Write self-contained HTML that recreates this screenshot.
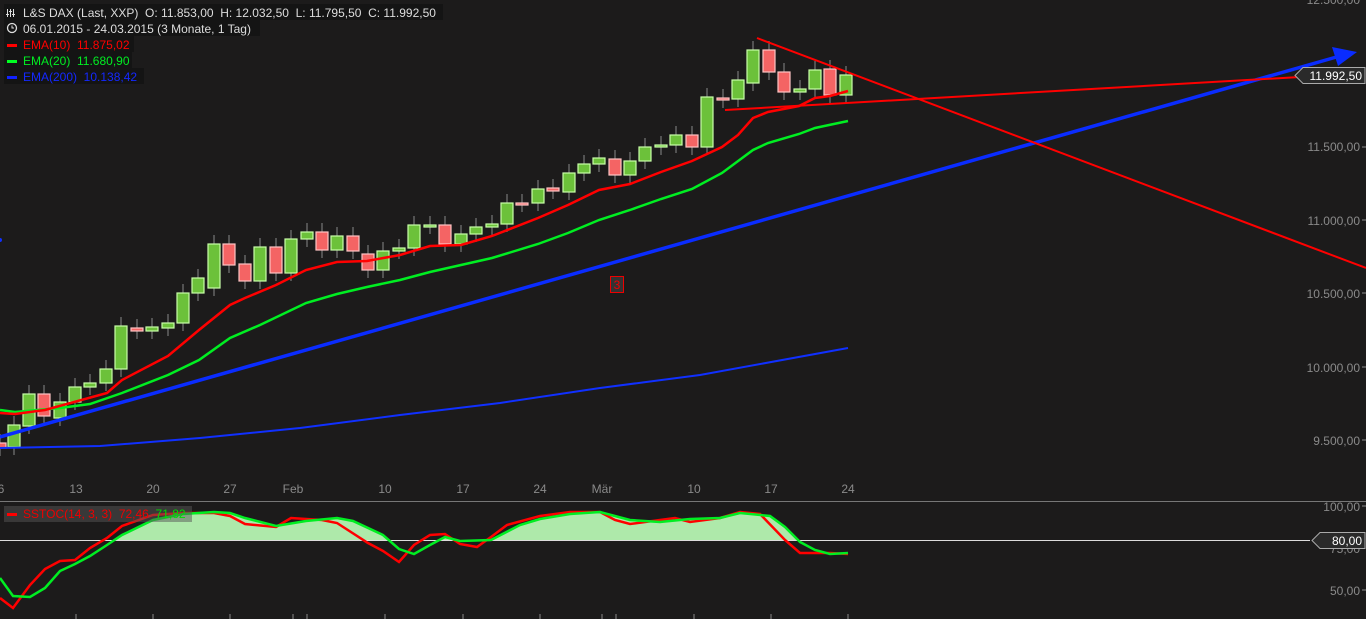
<!DOCTYPE html>
<html><head><meta charset="utf-8"><style>
html,body{margin:0;padding:0;background:#1c1b1b;width:1366px;height:619px;overflow:hidden}
svg{position:absolute;left:0;top:0}
.t{font-family:"Liberation Sans",sans-serif;font-size:12px;white-space:pre}
</style></head><body>
<svg id="s" width="1366" height="619" xmlns="http://www.w3.org/2000/svg">
<rect width="1366" height="619" fill="#1c1b1b"/>
<g id="candles"></g>
<polyline fill="none" stroke="#1030ff" stroke-width="2" points="0,448 100,446 200,438 300,428 400,415 500,403 600,388 700,375 848,348"/>
<polyline fill="none" stroke="#00ee22" stroke-width="2.5" points="0,410 15,412 60,408 90,404 122,393 168,375 199,360 230,338 260,325 306,303 337,294 367,287 400,280 430,272 461,265 492,258 538,244 568,233 599,220 630,210 661,199 692,189 722,173 753,150 768,143 799,134 815,128 848,121"/>
<polyline fill="none" stroke="#ff0000" stroke-width="2.5" points="0,413 15,414 45,410 107,393 122,380 168,356 199,330 230,305 245,298 276,285 306,270 337,262 367,261 400,255 430,246 461,245 492,236 538,218 568,205 599,190 630,184 661,172 692,161 722,147 738,135 753,118 768,112 799,106 815,98 830,96 848,91"/>
<line x1="0" y1="437" x2="1340" y2="56" stroke="#0a2cff" stroke-width="3.5"/>
<polygon points="1357,52 1332,47 1338,66" fill="#0a2cff"/>
<line x1="757" y1="38" x2="1366" y2="268" stroke="#ff0000" stroke-width="2"/>
<line x1="725" y1="110" x2="1300" y2="77" stroke="#ff0000" stroke-width="2"/>
<rect x="610.5" y="276.5" width="13" height="16" fill="#333" stroke="#e00" stroke-width="1"/>
<text x="617" y="289" class="t" fill="#e00" text-anchor="middle">3</text>
<circle cx="0" cy="240" r="2" fill="#1030ff"/>
<g class="t" fill="#8a8a8a" text-anchor="end">
<text x="1360" y="4">12.500,00</text>
<text x="1360" y="151">11.500,00</text>
<text x="1360" y="225">11.000,00</text>
<text x="1360" y="298">10.500,00</text>
<text x="1360" y="372">10.000,00</text>
<text x="1360" y="445">9.500,00</text>
<text x="1360" y="511">100,00</text>
<text x="1360" y="553">75,00</text>
<text x="1360" y="595">50,00</text>
</g>
<g stroke="#8a8a8a"><line x1="1362" y1="147" x2="1366" y2="147"/><line x1="1362" y1="220" x2="1366" y2="220"/><line x1="1362" y1="293" x2="1366" y2="293"/><line x1="1362" y1="367" x2="1366" y2="367"/><line x1="1362" y1="440" x2="1366" y2="440"/><line x1="1362" y1="506" x2="1366" y2="506"/><line x1="1362" y1="590" x2="1366" y2="590"/></g>
<polygon points="1295,75.5 1303,67.5 1365,67.5 1365,83.5 1303,83.5" fill="#2a2a2a" stroke="#aaa"/>
<text x="1362" y="80" class="t" fill="#fff" text-anchor="end">11.992,50</text>
<g class="t" fill="#8a8a8a" text-anchor="middle">
<text x="1" y="493">6</text><text x="76" y="493">13</text><text x="153" y="493">20</text><text x="230" y="493">27</text><text x="293" y="493">Feb</text><text x="385" y="493">10</text><text x="463" y="493">17</text><text x="540" y="493">24</text><text x="602" y="493">Mär</text><text x="694" y="493">10</text><text x="771" y="493">17</text><text x="848" y="493">24</text>
</g>
<g stroke="#8a8a8a"><line x1="76" y1="614" x2="76" y2="619"/><line x1="153" y1="614" x2="153" y2="619"/><line x1="230" y1="614" x2="230" y2="619"/><line x1="293" y1="614" x2="293" y2="619"/><line x1="307" y1="614" x2="307" y2="619"/><line x1="385" y1="614" x2="385" y2="619"/><line x1="463" y1="614" x2="463" y2="619"/><line x1="540" y1="614" x2="540" y2="619"/><line x1="602" y1="614" x2="602" y2="619"/><line x1="616" y1="614" x2="616" y2="619"/><line x1="694" y1="614" x2="694" y2="619"/><line x1="771" y1="614" x2="771" y2="619"/><line x1="848" y1="614" x2="848" y2="619"/></g>
<line x1="0" y1="501.5" x2="1366" y2="501.5" stroke="#777"/>
<defs><clipPath id="c"><rect x="0" y="500" width="1366" height="40"/></clipPath></defs>
<polygon clip-path="url(#c)" fill="#aee9aa" points="0,540 0,578 13,596 30,597 45,588 60,571 75,564 90,556 107,545 122,535 153,520 183,514 214,512 230,513 245,518 276,526 306,521 337,518 353,521 383,535 399,549 414,554 430,545 445,537 460,541 491,540 520,525 540,519 570,514 600,512 630,520 660,522 690,519 720,518 740,513 770,516 785,527 800,542 848,540"/>
<line x1="0" y1="540.5" x2="1310" y2="540.5" stroke="#ddd"/>
<polyline fill="none" stroke="#ff0000" stroke-width="2.5" points="0,598 13,608 30,585 45,569 60,561 75,560 90,548 107,538 122,526 153,515 183,513 214,513 230,516 245,524 276,527 291,518 306,519 322,520 337,523 368,543 383,551 399,562 414,545 430,535 445,534 460,544 477,547 491,537 507,525 540,516 570,512 600,512 615,520 630,524 660,520 675,518 690,522 720,518 740,512 760,514 785,540 800,553 830,553 848,554"/>
<polyline fill="none" stroke="#00ee22" stroke-width="2.5" points="0,578 13,596 30,597 45,588 60,571 75,564 90,556 107,545 122,535 153,520 183,514 214,512 230,513 245,518 276,526 306,521 337,518 353,521 383,535 399,549 414,554 430,545 445,537 460,541 491,540 520,525 540,519 570,514 600,512 630,520 660,522 690,519 720,518 740,513 770,516 785,527 800,542 815,550 830,554 848,553"/>
<polygon points="1312,540.5 1320,532.5 1365,532.5 1365,548.5 1320,548.5" fill="#2a2a2a" stroke="#aaa"/>
<text x="1362" y="545" class="t" fill="#fff" text-anchor="end">80,00</text>
<rect x="4" y="506" width="188" height="16" fill="#555" opacity="0.5"/>
<rect x="7" y="513" width="10" height="3" fill="#f00"/>
<text x="23" y="518" class="t" fill="#e00">SSTOC(14, 3, 3)  72,46  <tspan fill="#0d0">71,82</tspan></text>
<rect x="4" y="4" width="439" height="16" fill="#141414"/>
<rect x="4" y="20" width="256" height="16" fill="#141414"/>
<rect x="4" y="36" width="130" height="16" fill="#141414"/>
<rect x="4" y="52" width="128" height="16" fill="#141414"/>
<rect x="4" y="68" width="140" height="16" fill="#141414"/>
<g stroke="#ddd" stroke-width="1"><line x1="7.5" y1="9" x2="7.5" y2="17"/><line x1="10.5" y1="9" x2="10.5" y2="17"/><line x1="13.5" y1="9" x2="13.5" y2="17"/><line x1="6" y1="14.5" x2="9" y2="14.5"/><line x1="9" y1="11.5" x2="12" y2="11.5"/><line x1="12" y1="14.5" x2="15" y2="14.5"/></g>
<circle cx="12" cy="28" r="4.5" fill="none" stroke="#ddd" stroke-width="1.3"/><path d="M12 25.5V28H14" stroke="#ddd" fill="none"/>
<text x="23" y="17" class="t" fill="#ddd">L&amp;S DAX (Last, XXP)  O: 11.853,00  H: 12.032,50  L: 11.795,50  C: 11.992,50</text>
<text x="23" y="33" class="t" fill="#ddd">06.01.2015 - 24.03.2015 (3 Monate, 1 Tag)</text>
<rect x="7" y="44" width="10" height="3" fill="#f00"/><text x="23" y="49" class="t" fill="#f00">EMA(10)  11.875,02</text>
<rect x="7" y="60" width="10" height="3" fill="#0f2"/><text x="23" y="65" class="t" fill="#0e2">EMA(20)  11.680,90</text>
<rect x="7" y="76" width="10" height="3" fill="#12f"/><text x="23" y="81" class="t" fill="#1428ff">EMA(200)  10.138,42</text>
</svg>
<script>
var d=[[0,443,448,'r'],[14,425,447,'g'],[29,394,426,'g'],[44,394,416,'r'],[60,402,418,'g'],[75,387,402,'g'],[90,383,387,'g'],[106,369,383,'g'],[121,326,369,'g'],[137,328,331,'r'],[152,327,331,'g'],[168,323,328,'g'],[183,293,323,'g'],[198,278,293,'g'],[214,244,288,'g'],[229,244,265,'r'],[245,264,281,'r'],[260,247,281,'g'],[276,247,273,'r'],[291,239,273,'g'],[307,232,239,'g'],[322,232,250,'r'],[337,236,250,'g'],[353,236,251,'r'],[368,254,270,'r'],[383,251,270,'g'],[399,248,251,'g'],[414,225,248,'g'],[430,225,226,'g'],[445,225,244,'r'],[461,234,244,'g'],[476,227,234,'g'],[492,224,227,'g'],[507,203,224,'g'],[522,203,204,'r'],[538,189,203,'g'],[553,188,191,'r'],[569,173,192,'g'],[584,164,173,'g'],[599,158,164,'g'],[615,159,175,'r'],[630,161,175,'g'],[645,147,161,'g'],[661,145,147,'g'],[676,135,145,'g'],[692,135,147,'r'],[707,97,147,'g'],[723,98,100,'r'],[738,80,99,'g'],[753,50,83,'g'],[769,50,72,'r'],[784,72,92,'r'],[800,89,92,'g'],[815,70,89,'g'],[830,69,95,'r'],[846,75,95,'g']];
var g=document.getElementById('candles'),h='';
d.forEach(function(c){var x=c[0],t=c[1],b=c[2];
h+='<line x1="'+x+'" y1="'+(t-9)+'" x2="'+x+'" y2="'+(b+8)+'" stroke="#888"/>';
var f=c[3]=='g'?'#6cc13a':'#f46464',s=c[3]=='g'?'#c8ffa8':'#ffc4c4';
h+='<rect x="'+(x-6)+'" y="'+t+'" width="12" height="'+Math.max(b-t,2)+'" fill="'+f+'" stroke="'+s+'" stroke-width="1.2"/>';});
g.innerHTML=h;
</script>
</body></html>
